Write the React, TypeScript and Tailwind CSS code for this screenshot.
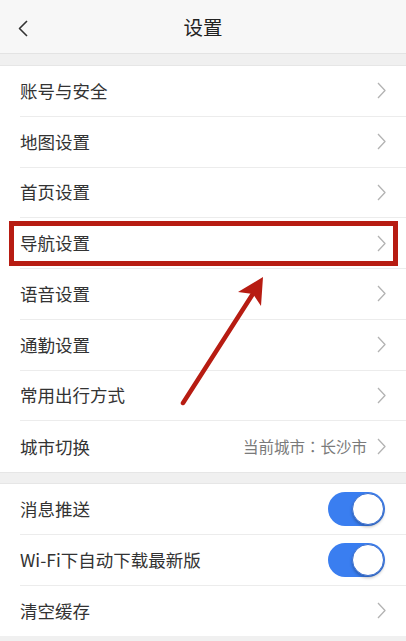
import React from 'react';

const font = { fontFamily: '"Noto Sans CJK SC", "Noto Sans", sans-serif' };

function Chevron() {
  return (
    <svg width="9" height="17" viewBox="0 0 9 17" fill="none">
      <polyline points="1,1 8,8.5 1,16" stroke="#b3b3b3" strokeWidth="1.3" strokeLinejoin="round" />
    </svg>
  );
}

function Toggle() {
  return (
    <div className="relative h-[34px] w-[57px] rounded-full bg-[#3a7ef0]">
      <div className="absolute right-[1px] top-[1px] h-[32px] w-[32px] rounded-full border border-[#3a6fd0] bg-white shadow-[0_2px_3px_rgba(0,0,0,0.25)]" />
    </div>
  );
}

type Row = { label: string; right?: 'chevron' | 'toggle'; extra?: React.ReactNode };

function Section({ rows }: { rows: Row[] }) {
  return (
    <div className="bg-white">
      {rows.map((r, i) => (
        <div key={r.label} className="h-[50.75px] pl-[20px]">
          <div
            className={
              'flex h-full items-center justify-between ' +
              (i < rows.length - 1 ? 'border-b border-[#ececec]' : '') +
              (r.right === 'toggle' ? ' pr-[21px]' : ' pr-[20px]')
            }
          >
            <span className="text-[17.5px] text-[#333333]">{r.label}</span>
            {r.right === 'toggle' ? (
              <Toggle />
            ) : (
              <div className="flex items-center gap-[10px]">
                {r.extra && <span className="text-[15.5px] text-[#7a7a7a]">{r.extra}</span>}
                <Chevron />
              </div>
            )}
          </div>
        </div>
      ))}
    </div>
  );
}

export default function App() {
  const first: Row[] = [
    { label: '账号与安全' },
    { label: '地图设置' },
    { label: '首页设置' },
    { label: '导航设置' },
    { label: '语音设置' },
    { label: '通勤设置' },
    { label: '常用出行方式' },
    {
      label: '城市切换',
      extra: (
        <>
          当前城市
          <span style={{ fontFamily: '"Noto Sans CJK TC", sans-serif' }}>：</span>
          长沙市
        </>
      ),
    },
  ];
  const second: Row[] = [
    { label: '消息推送', right: 'toggle' },
    { label: 'Wi-Fi下自动下载最新版', right: 'toggle' },
    { label: '清空缓存' },
  ];

  return (
    <div className="relative h-[641px] w-[406px] overflow-hidden bg-[#f0f0f0]" style={font}>
      <div className="relative flex h-[54px] items-center justify-center border-b border-[#e3e3e3] bg-[#f7f7f7]">
        <svg className="absolute left-[18px] top-[20px]" width="10" height="17" viewBox="0 0 10 17" fill="none">
          <polyline points="9,1 1.5,8.5 9,16" stroke="#333" strokeWidth="1.6" strokeLinejoin="round" />
        </svg>
        <span className="text-[19.5px] text-[#222]">设置</span>
      </div>
      <div className="h-[12px] border-b border-[#e6e6e6]" />
      <Section rows={first} />
      <div className="h-[12px] border-y border-[#e6e6e6]" />
      <Section rows={second} />

      {/* annotation */}
      <div className="absolute left-[9px] top-[221px] h-[45px] w-[389px] border-[5px] border-[#b71c12]" />
      <svg className="absolute left-0 top-0" width="406" height="641" viewBox="0 0 406 641">
        <line x1="183" y1="403" x2="256" y2="289" stroke="#b71c12" strokeWidth="4.5" strokeLinecap="round" />
        <polygon points="263,277 238,292 253,294 261,306" fill="#b71c12" />
      </svg>
    </div>
  );
}
